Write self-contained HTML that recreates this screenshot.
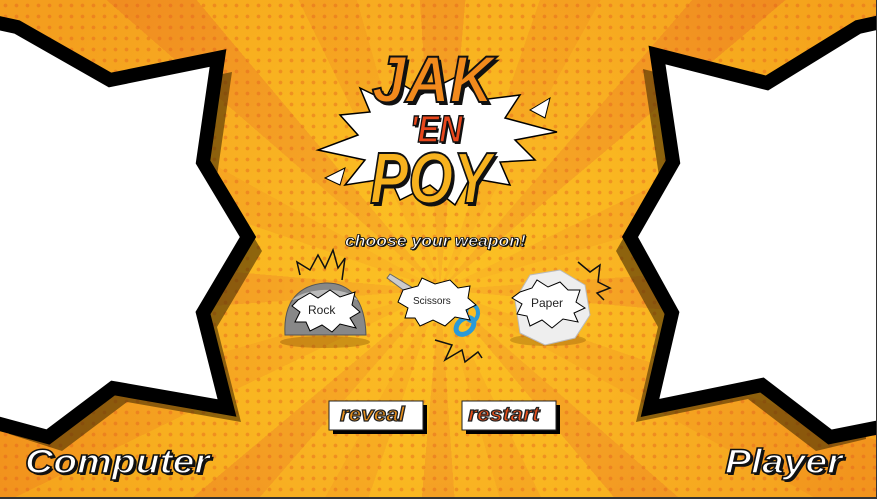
<!DOCTYPE html>
<html><head><meta charset="utf-8"><style>
html,body{margin:0;padding:0}
body{width:877px;height:499px;overflow:hidden;position:relative;font-family:"Liberation Sans",sans-serif;background:#f5a623}
#bg{position:absolute;left:0;top:0;width:877px;height:499px;
background:
radial-gradient(circle at 440px 290px, rgba(255,205,40,0.6) 0, rgba(255,195,40,0.3) 200px, rgba(235,100,20,0.2) 480px),
repeating-conic-gradient(from 5deg at 440px 290px,#f7b21e 0deg 14deg,#f39e1f 14deg 24deg,#f6ac20 24deg 36deg,#f09222 36deg 45deg);}
#dots{position:absolute;left:0;top:0;width:877px;height:499px;
background-image:radial-gradient(circle,rgba(225,90,30,0.4) 1.6px,transparent 2.2px);background-size:11px 11px;}
.t{position:absolute;font-style:italic;font-weight:bold;white-space:nowrap;transform-origin:0 0}
.lbl{position:absolute;font-size:12px;color:#222}
</style></head><body>
<div id="bg"></div><div id="dots"></div>
<svg width="877" height="499" style="position:absolute;left:0;top:0">
<polygon transform="translate(14,14)" fill="rgba(70,45,0,0.6)" points="17,27 110,80 218,58 203,162 248,237 203,313 227,408 113,388 48,437 -5,420"/>
<polygon fill="#fff" stroke="#000" stroke-width="14" stroke-linejoin="miter" points="17,27 110,80 218,58 203,162 248,237 203,313 227,408 113,388 48,437 -15,420 -15,20"/>
<polygon transform="translate(-14,14)" fill="rgba(70,45,0,0.6)" points="858,27 767,83 657,55 673,162 630,237 672,313 650,408 762,385 830,437 880,425"/>
<polygon fill="#fff" stroke="#000" stroke-width="14" stroke-linejoin="miter" points="858,27 767,83 657,55 673,162 630,237 672,313 650,408 762,385 830,437 890,425 890,20"/>
<polygon fill="#fff" stroke="#000" stroke-width="1.5" points="360,88 385,100 395,80 420,95 460,75 480,100 520,95 505,118 557,132 515,140 535,160 500,162 510,185 470,178 455,205 430,185 400,200 390,178 345,185 365,160 318,150 358,135 340,115 370,112"/>
<polygon fill="#fff" stroke="#000" points="530,110 550,98 545,118"/><polygon fill="#fff" stroke="#000" points="345,168 325,178 340,185"/>
<ellipse cx="325" cy="342" rx="45" ry="6" fill="rgba(120,70,0,0.35)"/>
<path d="M285,335 C283,300 300,285 325,283 C350,282 365,300 366,335 Z" fill="#888" stroke="#555"/>
<path d="M292,300 C305,288 345,285 358,300 C345,296 305,296 292,300Z" fill="#bbb"/>
<polyline fill="none" stroke="#111" stroke-width="1.5" points="300,275 297,262 310,270 318,255 325,268 333,250 338,268 345,258 342,280"/>
<polygon fill="#fff" stroke="#000" points="298,300 310,293 318,298 330,290 340,297 355,292 352,305 360,312 350,318 356,328 340,324 332,332 322,325 310,331 306,322 295,322 300,312 292,306"/>
<path d="M387,278 L410,295 L413,288 L390,274Z" fill="#ccc" stroke="#666"/>
<ellipse cx="465" cy="326" rx="10" ry="7" fill="none" stroke="#2a9ad8" stroke-width="5" transform="rotate(-40 465 326)"/>
<ellipse cx="472" cy="313" rx="6" ry="8" fill="none" stroke="#2a9ad8" stroke-width="4"/>
<polyline fill="none" stroke="#111" stroke-width="1.5" points="435,340 452,345 445,360 462,350 465,362 478,352 482,358"/>
<polygon fill="#fff" stroke="#000" points="403,290 418,286 422,278 435,284 450,280 458,288 470,286 468,298 476,305 466,310 470,320 455,317 445,326 433,320 420,326 415,318 405,318 408,308 398,302"/>
<ellipse cx="548" cy="340" rx="38" ry="6" fill="rgba(120,70,0,0.3)"/>
<path d="M515,300 L530,275 L560,270 L585,285 L590,315 L575,338 L545,345 L520,333Z" fill="#eee" stroke="#bbb"/>
<polyline fill="none" stroke="#111" stroke-width="1.5" points="578,262 590,272 600,265 598,282 610,288 597,293 604,300"/>
<polygon fill="#fff" stroke="#000" points="520,292 532,288 537,280 548,287 560,282 568,290 580,290 576,302 585,308 574,313 578,322 563,319 552,328 542,320 530,326 527,316 517,314 522,304 512,298"/>
<rect x="333" y="405" width="94" height="29" fill="#000"/>
<rect x="329" y="401" width="94" height="29" fill="#fff" stroke="#222"/>
<rect x="466" y="405" width="94" height="29" fill="#000"/>
<rect x="462" y="401" width="94" height="29" fill="#fff" stroke="#222"/>
</svg>
<div class="t" style="left:372px;top:41px;font-size:66px;color:#f28a1c;-webkit-text-stroke:2px #111;text-shadow:3px 3px 0 #111;transform:scaleX(0.92)">JAK</div>
<div class="t" style="left:410px;top:109px;font-size:38px;color:#e8471c;-webkit-text-stroke:1.5px #111;text-shadow:2px 2px 0 #111;transform:scaleX(0.85)">'EN</div>
<div class="t" style="left:370px;top:138px;font-size:72px;color:#f7b21e;-webkit-text-stroke:2px #111;text-shadow:3px 3px 0 #111;transform:scaleX(0.8)">POY</div>
<div class="t" style="left:345px;top:233px;font-size:16px;color:#fff;-webkit-text-stroke:0.8px #111;text-shadow:1px 1px 0 #111;transform:scaleX(1.1)">choose your weapon!</div>
<div class="lbl" style="left:308px;top:303px">Rock</div>
<div class="lbl" style="left:413px;top:296px;font-size:10px">Scissors</div>
<div class="lbl" style="left:531px;top:296px">Paper</div>
<div class="t" style="left:340px;top:404px;font-size:20px;color:#e8901c;-webkit-text-stroke:1.2px #222;transform:scaleX(1.12)">reveal</div>
<div class="t" style="left:468px;top:404px;font-size:20px;color:#e8501c;-webkit-text-stroke:1.2px #222;transform:scaleX(1.15)">restart</div>
<div class="t" style="left:25px;top:443px;font-size:34px;color:#fff;-webkit-text-stroke:1.5px #111;text-shadow:2px 2px 0 #111;transform:scaleX(1.15)">Computer</div>
<div class="t" style="left:725px;top:443px;font-size:34px;color:#fff;-webkit-text-stroke:1.5px #111;text-shadow:2px 2px 0 #111;transform:scaleX(1.15)">Player</div>
<div style="position:absolute;right:0;top:0;width:1px;height:499px;background:#333"></div>
<div style="position:absolute;left:0;bottom:0;width:877px;height:2px;background:#333"></div>
</body></html>
